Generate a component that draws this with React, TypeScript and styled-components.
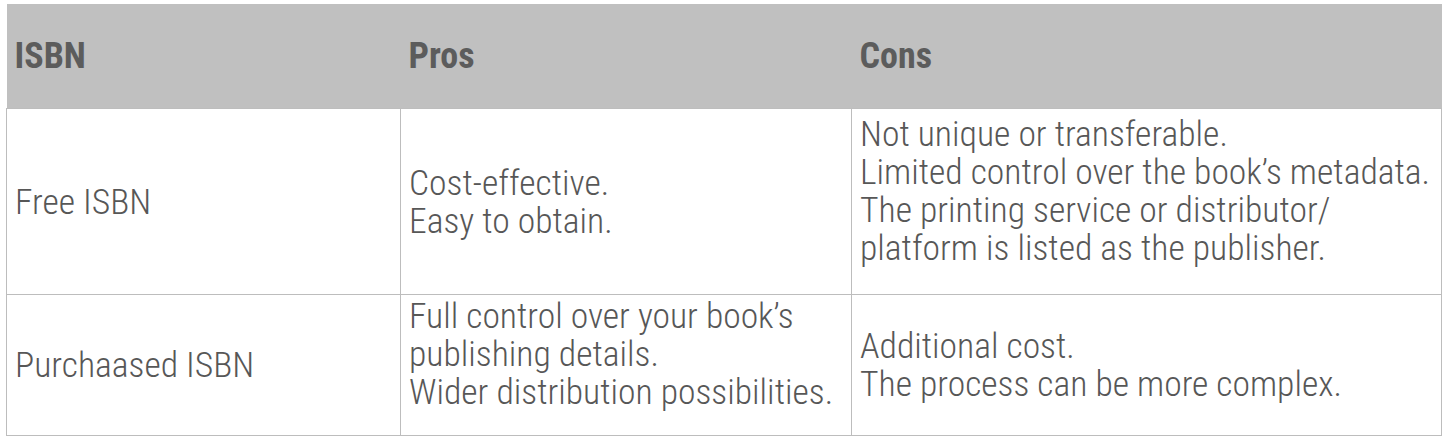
import styled, { createGlobalStyle } from "styled-components";

interface ICell {
  lines: string[];
  // the cell that sets the row height keeps some room under its text
  tall?: boolean;
}

interface IRow {
  isbn: string;
  pros: ICell;
  cons: ICell;
}

type ColPropsType = {
  $w: number;
};

type RowPropsType = {
  $h: number;
};

type CellPropsType = {
  $tall?: boolean;
};

const rows: IRow[] = [
  {
    isbn: "Free ISBN",
    pros: { lines: ["Cost-effective.", "Easy to obtain."] },
    cons: {
      tall: true,
      lines: [
        "Not unique or transferable.",
        "Limited control over the book’s metadata.",
        "The printing service or distributor/",
        "platform is listed as the publisher.",
      ],
    },
  },
  {
    isbn: "Purchaased ISBN",
    pros: {
      tall: true,
      lines: [
        "Full control over your book’s",
        "publishing details.",
        "Wider distribution possibilities.",
      ],
    },
    cons: { lines: ["Additional cost.", "The process can be more complex."] },
  },
];

const rowHeights = [186, 141];

function App() {
  return (
    <>
      <GlobalStyle />
      <Page>
        <Table>
          <colgroup>
            <Col $w={394} />
            <Col $w={451} />
            <Col $w={590} />
          </colgroup>
          <thead>
            <tr>
              <Th>ISBN</Th>
              <Th>Pros</Th>
              <Th>Cons</Th>
            </tr>
          </thead>
          <tbody>
            {rows.map((row, i) => (
              <Row key={row.isbn} $h={rowHeights[i]}>
                <Td>{row.isbn}</Td>
                <Td $tall={row.pros.tall}>
                  {row.pros.lines.map((line) => (
                    <Line key={line}>{line}</Line>
                  ))}
                </Td>
                <Td $tall={row.cons.tall}>
                  {row.cons.lines.map((line) => (
                    <Line key={line}>{line}</Line>
                  ))}
                </Td>
              </Row>
            ))}
          </tbody>
        </Table>
      </Page>
    </>
  );
}

export default App;

const GlobalStyle = createGlobalStyle`
  html, body {
    margin: 0;
    padding: 0;
    background: #ffffff;
  }
`;

const Page = styled.div`
  padding: 4px 0 0 6px;
`;

const Table = styled.table`
  width: 1436px;
  border-collapse: collapse;
  table-layout: fixed;
  font-family: "Roboto Condensed", Roboto, sans-serif;
  color: #575757;
`;

const Col = styled.col<ColPropsType>`
  width: ${(props) => props.$w}px;
`;

const Th = styled.th`
  height: 104px;
  padding: 0 8px;
  background: #c0c0c0;
  color: #5c5c5c;
  font-size: 36px;
  font-weight: 700;
  text-align: left;
  vertical-align: middle;
`;

const Row = styled.tr<RowPropsType>`
  height: ${(props) => props.$h}px;
`;

const Td = styled.td<CellPropsType>`
  padding: ${(props) => (props.$tall ? "2px 8px 24px" : "4px 8px")};
  border: 1px solid #bdbdbd;
  font-size: 35.6px;
  font-weight: 300;
  line-height: 38px;
  vertical-align: middle;
`;

const Line = styled.div`
  white-space: nowrap;
`;
